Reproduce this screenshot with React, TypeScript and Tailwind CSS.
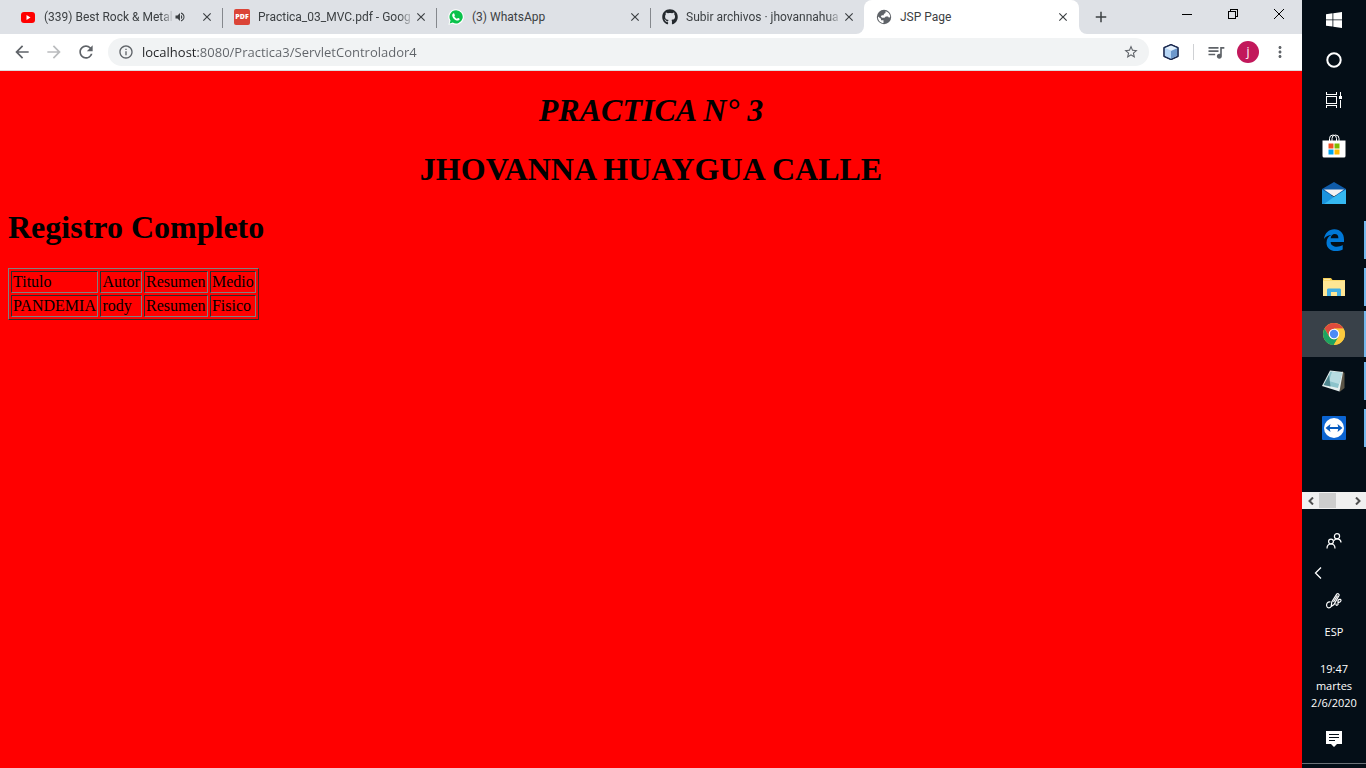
import React from "react";
import {
  MdArrowBack,
  MdArrowForward,
  MdClose,
  MdInfoOutline,
  MdMoreVert,
  MdQueueMusic,
  MdRefresh,
  MdStarBorder,
  MdVolumeUp,
  MdAdd,
} from "react-icons/md";
import { FaGithub } from "react-icons/fa";

type Tab = {
  title: string;
  icon: React.ReactNode;
  audible?: boolean;
  active?: boolean;
  divider?: boolean;
};

function YouTubeIcon() {
  return (
    <svg viewBox="0 0 16 16" className="size-4">
      <rect x="1" y="3" width="14" height="11" rx="3" fill="#f00" />
      <path d="M6.5 6v5l4-2.5z" fill="#fff" />
    </svg>
  );
}

function PdfIcon() {
  return (
    <span className="flex size-4 items-center justify-center rounded-xs bg-[#db4437] font-['Open_Sans',sans-serif] text-[7px] font-extrabold text-white">
      PDF
    </span>
  );
}

function WhatsAppIcon() {
  return (
    <svg viewBox="0 0 16 16" className="size-4">
      <path d="M8 .3a7.6 7.6 0 0 0-6.6 11.4L.4 15.7l4-1A7.7 7.7 0 1 0 8 .3z" fill="#fff" />
      <path d="M8.1 1.3a6.6 6.6 0 0 0-5.6 10.1l-.8 3 3.1-.8A6.6 6.6 0 1 0 8.1 1.3z" fill="#0ac24b" />
      <path
        d="M5.6 4.3c.3 0 .5 0 .6.3l.7 1.6c.1.3-.4.8-.6 1 .7 1.4 1.5 2 2.7 2.6.3-.3.7-.9.9-.9.3 0 1.6.7 1.8.9.2.5-.4 1.7-1.8 1.8-2.5.1-5.600-2.900-5.700-5.200 0-1.100.8-2.100 1.400-2.100z"
        fill="#fff"
      />
    </svg>
  );
}

function GlobeIcon() {
  return (
    <svg viewBox="0 0 16 16" className="size-4">
      <circle cx="8" cy="8" r="7.200" fill="#5f6368" />
      <path
        d="M9.500 2.200c2.800.6 4.700 3 4.700 5.800l-1.200.8-1-1.300H9.800L8.500 8.800H6L4.800 7.500l1-1.200h2V5l1.700-1z"
        fill="#fff"
      />
      <path d="M2 7.500l3 2.300v1.400h2.500v2.900C4.500 14 1.700 11.500 2 7.500z" fill="#fff" />
    </svg>
  );
}

const tabs: Tab[] = [
  { title: "(339) Best Rock & Metal", icon: <YouTubeIcon />, audible: true, divider: true },
  { title: "Practica_03_MVC.pdf - Goog", icon: <PdfIcon />, divider: true },
  { title: "(3) WhatsApp", icon: <WhatsAppIcon />, divider: true },
  { title: "Subir archivos · jhovannahua", icon: <FaGithub className="size-4 text-[#24292e]" /> },
  { title: "JSP Page", icon: <GlobeIcon />, active: true },
];

function BrowserTab({ tab }: { tab: Tab }) {
  return (
    <div
      className={
        tab.active
          ? "relative flex h-full w-[215px] min-w-0 items-center rounded-t-lg bg-white pr-[9px] pl-3"
          : "relative flex h-full w-[214px] min-w-0 items-center pr-2 pl-3"
      }
    >
      {tab.active && (
        <>
          <span className="absolute bottom-0 -left-2 size-2 bg-white">
            <span className="block size-2 rounded-br-lg bg-[#dee1e6]" />
          </span>
          <span className="absolute -right-2 bottom-0 size-2 bg-white">
            <span className="block size-2 rounded-bl-lg bg-[#dee1e6]" />
          </span>
        </>
      )}
      <a href="#tab" className="flex min-w-0 flex-1 items-center gap-2">
        <span className="shrink-0">{tab.icon}</span>
        <span
          className={
            tab.title.length > 20
              ? "min-w-0 flex-1 mask-r-from-90% font-['Roboto',sans-serif] text-xs leading-4 whitespace-nowrap text-[#3c4043]"
              : "min-w-0 flex-1 font-['Roboto',sans-serif] text-xs leading-4 whitespace-nowrap text-[#3c4043]"
          }
        >
          {tab.title}
        </span>
      </a>
      {tab.audible && <MdVolumeUp className="size-3 shrink-0 text-[#3c4043]" />}
      <button
        aria-label={"Cerrar " + tab.title}
        className={
          tab.audible
            ? "ml-[14px] flex size-[14px] shrink-0 items-center justify-center text-[#3c4043]"
            : "flex size-[14px] shrink-0 items-center justify-center text-[#3c4043]"
        }
      >
        <MdClose className="size-[14px]" />
      </button>
      {tab.divider && <span className="absolute top-2 -right-px h-5 w-px bg-[#85888d]" />}
    </div>
  );
}

function TabStrip() {
  return (
    <div className="flex h-[34px] items-start bg-[#dee1e6]">
      <div className="flex h-full min-w-0 flex-1 items-center pl-2">
        {tabs.map((tab) => (
          <BrowserTab key={tab.title} tab={tab} />
        ))}
        <button aria-label="Nueva pestaña" className="ml-[10px] flex size-6 items-center justify-center text-[#3c4043]">
          <MdAdd className="size-[18px]" />
        </button>
      </div>
      <div className="flex shrink-0">
        <button aria-label="Minimizar" className="flex h-7 w-[46px] items-center justify-center">
          <svg viewBox="0 0 10 10" className="size-[10px]" stroke="#000" shapeRendering="crispEdges">
            <path d="M0 5.500h10" />
          </svg>
        </button>
        <button aria-label="Restaurar" className="flex h-7 w-[46px] items-center justify-center">
          <svg viewBox="0 0 10 10" className="size-[10px]" fill="none" stroke="#000" shapeRendering="crispEdges">
            <path d="M.5 2.500h7v7h-7zM2.500 2.500v-2h7v7h-2" />
          </svg>
        </button>
        <button aria-label="Cerrar" className="flex h-7 w-[46px] items-center justify-center">
          <svg viewBox="0 0 10 10" className="size-[10px]" stroke="#000">
            <path d="M0 0l10 10M10 0L0 10" />
          </svg>
        </button>
      </div>
    </div>
  );
}

function Toolbar() {
  return (
    <div className="flex h-[37px] items-center border-b border-[#dcdcdc] bg-white pr-[13px] pl-[10px] text-[#5f6368]">
      <button aria-label="Atrás" className="flex h-6 w-6 items-center justify-center">
        <MdArrowBack className="size-5" />
      </button>
      <button aria-label="Adelante" className="ml-2 flex h-6 w-6 items-center justify-center text-[#babcbe]">
        <MdArrowForward className="size-5" />
      </button>
      <button aria-label="Recargar" className="ml-2 flex h-6 w-6 items-center justify-center">
        <MdRefresh className="size-5" />
      </button>
      <div className="ml-[10px] flex h-7 min-w-0 flex-1 items-center rounded-full bg-[#f1f3f4] px-[10px]">
        <MdInfoOutline className="size-4 shrink-0" />
        <input
          aria-label="Dirección"
          defaultValue="localhost:8080/Practica3/ServletControlador4"
          className="ml-2 h-5 min-w-0 flex-1 bg-[linear-gradient(90deg,#202124_56px,#5f6368_56px)] bg-clip-text text-[13px] text-transparent outline-none"
        />
        <button aria-label="Añadir a marcadores">
          <MdStarBorder className="size-4" />
        </button>
      </div>
      <button aria-label="NetBeans Connector" className="ml-[14px]">
        <svg viewBox="0 0 16 16" className="size-4" stroke="#1c2a50" strokeLinejoin="round">
          <path d="M8 .6l7 3v8.800l-7 3.200-7-3.200V3.600z" fill="#a9cbee" />
          <path d="M1.600 4.300L8 7v7.600l-6.400-3z" fill="#b7d6f5" stroke="none" />
          <path d="M14.400 4.300L8 7v7.600l6.400-3z" fill="#6d98cc" stroke="none" />
          <path d="M8 1.300l6.200 2.700L8 6.800 1.800 4z" fill="#e3effb" stroke="none" />
          <path d="M8 .6l7 3v8.800l-7 3.200-7-3.200V3.600z" fill="none" strokeWidth="1.300" />
        </svg>
      </button>
      <span className="ml-[14px] h-4 w-px bg-[#cfd1d4]" />
      <button aria-label="Controlar contenido multimedia" className="ml-3">
        <MdQueueMusic className="size-5" />
      </button>
      <button
        aria-label="Perfil"
        className="ml-[11px] flex size-[22px] items-center justify-center rounded-full bg-[#c2185b] text-xs text-white"
      >
        j
      </button>
      <button aria-label="Menú" className="ml-3">
        <MdMoreVert className="size-[18px]" />
      </button>
    </div>
  );
}

const rows = [
  ["Titulo", "Autor", "Resumen", "Medio"],
  ["PANDEMIA", "rody", "Resumen", "Fisico"],
];

function PageContent() {
  return (
    <main className="flex-1 bg-[#ff0000] px-2 pt-[21px] font-['Liberation_Serif',serif] text-black">
      <header className="flex flex-col gap-[22px] text-center text-[32px] leading-[37px] font-bold">
        <h1 className="italic">PRACTICA N° 3</h1>
        <h1>JHOVANNA HUAYGUA CALLE</h1>
      </header>
      <section className="mt-[21px] flex flex-col items-start gap-[22px]">
        <h1 className="text-[32px] leading-[37px] font-bold">Registro Completo</h1>
        <table className="w-[251px] border-separate border-spacing-[2px] border border-t-[#808080] border-r-[#2c2c2c] border-b-[#2c2c2c] border-l-[#808080] text-base leading-[18px]">
          <tbody>
            {rows.map((row) => (
              <tr key={row[0]}>
                {row.map((cell) => (
                  <td
                    key={cell}
                    className="border border-t-[#2c2c2c] border-r-[#808080] border-b-[#808080] border-l-[#2c2c2c] p-px"
                  >
                    {cell}
                  </td>
                ))}
              </tr>
            ))}
          </tbody>
        </table>
      </section>
    </main>
  );
}

function StoreIcon() {
  return (
    <svg viewBox="0 0 24 24" className="size-6">
      <path d="M7.500 7V4.500a3.500 3.500 0 0 1 7 0V7M10 7V4.500a3.500 3.500 0 0 1 7 0V7" fill="none" stroke="#fff" />
      <path d="M.5 6.500h23V22a1.500 1.500 0 0 1-1.500 1.500H2A1.500 1.500 0 0 1 .5 22z" fill="#fff" />
      <path d="M6.500 9.500h5v5h-5z" fill="#f25022" />
      <path d="M12.500 9.500h5v5h-5z" fill="#7fba00" />
      <path d="M6.500 15.500h5v5h-5z" fill="#00a4ef" />
      <path d="M12.500 15.500h5v5h-5z" fill="#ffb900" />
    </svg>
  );
}

function MailIcon() {
  return (
    <svg viewBox="0 0 24 24" className="size-6">
      <path d="M0 8l12-7 12 7v6H0z" fill="#0f5ba8" />
      <path d="M0 8.500L12 16l12-7.500V23H0z" fill="#1a93dd" />
      <path d="M24 8.500V23H2l10-7z" fill="#35b8f1" />
      <path d="M2 8.500h20l-10 7z" fill="#f2f2f2" />
    </svg>
  );
}

function EdgeIcon() {
  return (
    <svg viewBox="0 0 24 24" className="size-6">
      <path
        d="M2 11C2.800 5.200 6.800 1.300 12.300 1.300 18.500 1.300 22 5.600 22 11.500V14H8.600c.2 3.400 3.100 4.700 6.200 4.700 2.200 0 4.200-.6 5.900-1.700v4.400c-2 1.200-4.300 1.700-6.800 1.700-5.700 0-9.400-3.500-9.400-8.400 0-3.800 2-6.500 5.200-7.900C6.500 7 3.700 8.500 2 11zm6.700-.7h7.700c0-2.800-1.300-4.200-3.700-4.200-2.300 0-3.700 1.800-4 4.200z"
        fill="#0078d7"
      />
    </svg>
  );
}

function FolderIcon() {
  return (
    <svg viewBox="0 0 24 24" className="size-6">
      <path d="M1 3h8l1.500 2H23v16H1z" fill="#f5c947" />
      <path d="M1 5.500h22V21H1z" fill="#ffe694" />
      <path d="M2 3.800h6v1H2z" fill="#fff2bd" />
      <path d="M5 21v-6c0-1 .6-1.500 1.500-1.500h11c1 0 1.500.6 1.500 1.500v6h-4v-4H9v4z" fill="#42aee4" />
    </svg>
  );
}

function ChromeIcon() {
  return (
    <svg viewBox="0 0 24 24" className="size-6">
      <circle cx="12" cy="12" r="11" fill="#fbca3e" />
      <path d="M12 12L7.300 14.700 2.500 6.500A11 11 0 0 1 21.500 6.600H12z" fill="#de4b3d" />
      <path d="M2.500 6.500l4.800 8.300L12 17.400l4.600-2.600L11.800 23A11 11 0 0 1 2.500 6.500z" fill="#1da362" />
      <path d="M12 6.700h9.600A11 11 0 0 1 11.800 23l4.900-8.300z" fill="#fbca3e" />
      <circle cx="12" cy="12" r="5.300" fill="#fff" />
      <circle cx="12" cy="12" r="4.200" fill="#4c8bf5" />
    </svg>
  );
}

function NotepadIcon() {
  return (
    <svg viewBox="0 0 24 24" className="size-6">
      <path d="M20 2l2.500 2v15l-5 4z" fill="#5b5446" />
      <path d="M8 1.500L21 3l-3.500 19.500L0 17z" fill="#e4eeee" />
      <path d="M8.500 2.500L20 4l-4 15-13.500-3z" fill="#8cc3cb" />
      <path d="M10 2.700L7 12l10 3 3-11z" fill="#b8dce2" />
      <path d="M1.500 16L7 6l1.500 11.500z" fill="#4e858e" />
    </svg>
  );
}

function TeamViewerIcon() {
  return (
    <svg viewBox="0 0 24 24" className="size-6">
      <rect width="24" height="24" rx="1" fill="#0b64d2" />
      <circle cx="12" cy="12" r="10" fill="#fff" />
      <path d="M3.500 12l5-4-.7 3h8.400l-.7-3 5 4-5 4 .7-3H7.800l.7 3z" fill="#075bc0" />
    </svg>
  );
}

const apps = [
  { name: "Microsoft Store", icon: <StoreIcon />, state: "idle" },
  { name: "Correo", icon: <MailIcon />, state: "idle" },
  { name: "Microsoft Edge", icon: <EdgeIcon />, state: "open" },
  { name: "Explorador de archivos", icon: <FolderIcon />, state: "open" },
  { name: "Google Chrome", icon: <ChromeIcon />, state: "focused" },
  { name: "Bloc de notas", icon: <NotepadIcon />, state: "open" },
  { name: "TeamViewer", icon: <TeamViewerIcon />, state: "open" },
];

function Taskbar() {
  return (
    <aside className="flex w-16 shrink-0 flex-col bg-[#040e17] text-white">
      <button aria-label="Inicio" className="flex h-10 items-center justify-center">
        <svg viewBox="0 0 16 16" className="size-4" fill="#fff">
          <path d="M0 2.200l6.500-.9v6.200H0zM7.300 1.200L16 0v7.500H7.300zM0 8.300h6.500v6.300L0 13.700zM7.300 8.300H16V16l-8.700-1.200z" />
        </svg>
      </button>
      <button aria-label="Buscar" className="flex h-10 items-center justify-center">
        <svg viewBox="0 0 16 16" className="size-4" fill="none" stroke="#fff" strokeWidth="2">
          <circle cx="8" cy="8" r="6.700" />
        </svg>
      </button>
      <button aria-label="Vista de tareas" className="flex h-10 items-center justify-center">
        <svg viewBox="0 0 16 16" className="size-4" fill="none" stroke="#fff" shapeRendering="crispEdges">
          <path d="M.5 4.500h10v7H.5zM.5 0v2.500h10V0M.5 16v-2.500h10V16M14.500 0v4M14.500 8v8" />
          <path d="M13 4h3v3h-3z" fill="#fff" stroke="none" />
        </svg>
      </button>
      <nav className="flex flex-col gap-px pt-[3px]">
        {apps.map((app) => (
          <button
            key={app.name}
            aria-label={app.name}
            className={
              app.state === "focused"
                ? "relative flex h-[46px] items-center justify-center bg-[#394149]"
                : "relative flex h-[46px] items-center justify-center"
            }
          >
            {app.icon}
            {app.state === "open" && <span className="absolute top-1 right-0 h-[38px] w-[2px] bg-[#76b9ed]" />}
            {app.state === "focused" && <span className="absolute inset-y-0 right-0 w-[2px] bg-[#76b9ed]" />}
          </button>
        ))}
      </nav>
      <div className="mt-auto flex h-[17px] items-center bg-[#f0f0f0] text-[#505050]">
        <button aria-label="Desplazar a la izquierda" className="flex h-full w-[17px] items-center justify-center">
          <svg viewBox="0 0 8 8" className="size-2" fill="none" stroke="currentColor" strokeWidth="2">
            <path d="M6 .5L2.500 4 6 7.500" />
          </svg>
        </button>
        <span className="h-[15px] w-[17px] bg-[#cdcdcd]" />
        <button
          aria-label="Desplazar a la derecha"
          className="ml-auto flex h-full w-[17px] items-center justify-center"
        >
          <svg viewBox="0 0 8 8" className="size-2" fill="none" stroke="currentColor" strokeWidth="2">
            <path d="M2 .5L5.500 4 2 7.500" />
          </svg>
        </button>
      </div>
      <div className="flex flex-col items-center pt-4">
        <button aria-label="Contactos" className="flex h-8 w-full items-center justify-center">
          <svg viewBox="0 0 16 16" className="size-4" fill="none" stroke="#fff" strokeWidth="1.200">
            <circle cx="5" cy="8.500" r="2.400" />
            <circle cx="11" cy="3.200" r="2.600" />
            <path d="M1 15.500c0-3 1.500-4.500 4-4.500s4 1.500 4 4.500M8 7.500c2.500-2.800 7-1.500 7 2" />
          </svg>
        </button>
        <button aria-label="Mostrar iconos ocultos" className="flex h-8 w-full items-center pl-3">
          <svg viewBox="0 0 8 12" className="h-3 w-2" fill="none" stroke="#fff" strokeWidth="1.300">
            <path d="M7 .5L1.500 6 7 11.500" />
          </svg>
        </button>
        <button aria-label="Área de trabajo de Windows Ink" className="flex h-6 w-full items-center justify-center">
          <svg viewBox="0 0 16 16" className="size-4" fill="none" stroke="#fff" strokeWidth="1.200">
            <path d="M4.500 9C1.500 8.500.3 10.500.7 13c.5 2.500 3.300 2.500 4.500.5M5.200 13.500l.6-4.500 5-8c1.200-.8 2.700 0 2.200 1.500l-5 9zM7.500 9l4-6.500M10 10.500c-.3 2 1 2.500 2 1V7.500c1.500-2 3.500-1 2.800.5-.6 1.200-2 1.500-2.800 1.200" />
          </svg>
        </button>
        <button className="mt-[7px] h-6 w-full text-[11px] leading-6">ESP</button>
        <button className="mt-4 w-full text-center text-[11px] leading-[17px]">
          <span className="block">19:47</span>
          <span className="block">martes</span>
          <span className="block">2/6/2020</span>
        </button>
        <button aria-label="Centro de actividades" className="mt-3 flex h-8 w-full items-center justify-center">
          <svg viewBox="0 0 16 16" className="size-4">
            <path d="M0 0h16v13h-5l-3 3-3-3H0z" fill="#fff" />
            <path d="M3 3.500h10M3 6.500h10M3 9.500h6" stroke="#040e17" />
          </svg>
        </button>
        <button
          aria-label="Mostrar escritorio"
          className="mt-2 h-[5px] w-full border-t border-[#6b7278]"
        />
      </div>
    </aside>
  );
}

export default function App() {
  return (
    <div className="flex min-h-screen font-['Open_Sans',sans-serif]">
      <div className="flex min-w-0 flex-1 flex-col">
        <TabStrip />
        <Toolbar />
        <PageContent />
      </div>
      <Taskbar />
    </div>
  );
}
